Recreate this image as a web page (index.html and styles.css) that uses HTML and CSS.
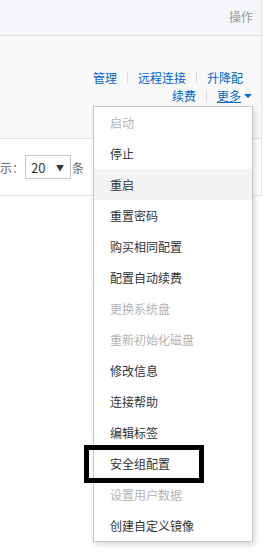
FILE: index.html
```html
<!DOCTYPE html>
<html lang="zh-CN">
<head>
  <meta charset="UTF-8" />
  <meta name="viewport" content="width=device-width, initial-scale=1" />
  <title>实例列表</title>
  <link rel="stylesheet" href="styles.css">
</head>
<body>
  <div class="table">
    <div class="thead">操作</div>
    <div class="row">
      <div class="ops">
        <div class="ops-line first">
          <a href="#">管理</a><span class="sep"></span><a href="#">远程连接</a><span class="sep"></span><a href="#">升降配</a>
        </div>
        <div class="ops-line">
          <a href="#">续费</a><span class="sep"></span><a href="#" class="more">更多</a><span class="caret"></span>
        </div>
      </div>
    </div>
    <div class="pager">
      <span class="pager-label">示：</span>
      <span class="select"><span>20</span><span class="arrow">▼</span></span>
      <span class="pager-label">条</span>
    </div>
  </div>

  <ul class="menu">
    <li class="disabled">启动</li>
    <li>停止</li>
    <li class="hover">重启</li>
    <li>重置密码</li>
    <li>购买相同配置</li>
    <li>配置自动续费</li>
    <li class="disabled">更换系统盘</li>
    <li class="disabled">重新初始化磁盘</li>
    <li>修改信息</li>
    <li>连接帮助</li>
    <li>编辑标签</li>
    <li>安全组配置</li>
    <li class="disabled">设置用户数据</li>
    <li>创建自定义镜像</li>
  </ul>

  <div class="mark"></div>
</body>
</html>
```

FILE: styles.css
```css
* {
  box-sizing: border-box;
}
body {
  margin: 0;
  width: 277px;
  height: 557px;
  overflow: hidden;
  background: #fff;
  font-family: "Noto Sans CJK SC", "Microsoft YaHei", sans-serif;
  font-size: 12px;
  color: #333;
  position: relative;
}
a {
  color: #0066cc;
  text-decoration: none;
}
.table {
  width: 262px;
  border-right: 1px solid #e5e5e5;
}
.thead {
  height: 36px;
  line-height: 34px;
  padding-right: 8px;
  text-align: right;
  color: #999;
  background: #f4f6f9;
  border-bottom: 1px solid #e1e1e1;
}
.row {
  height: 103px;
  background: #f9f9f9;
  border-bottom: 1px solid #e1e1e1;
  padding: 33px 9px 0 0;
}
.ops-line {
  display: flex;
  justify-content: flex-end;
  align-items: center;
  height: 18px;
  line-height: 18px;
}
.ops-line.first {
  padding-right: 9px;
}
.sep {
  display: inline-block;
  width: 1px;
  height: 12px;
  background: #dcdcdc;
  margin: 0 10px;
}
.more {
  text-decoration: underline;
}
.caret {
  display: inline-block;
  margin-left: 3px;
  border-left: 4px solid transparent;
  border-right: 4px solid transparent;
  border-top: 4px solid #0066cc;
}
.pager {
  height: 57px;
  display: flex;
  align-items: center;
  border-bottom: 1px solid #e1e1e1;
  color: #666;
}
.select {
  display: flex;
  align-items: center;
  justify-content: space-between;
  width: 46px;
  height: 24px;
  padding: 0 6px 0 5px;
  border: 1px solid #c9c9c9;
  color: #333;
  font-size: 13px;
  margin-right: 1px;
  margin-left: 1px;
}
.arrow {
  font-size: 8px;
  color: #333;
}
.menu {
  position: absolute;
  left: 93px;
  top: 106px;
  width: 160px;
  margin: 0;
  padding: 0;
  list-style: none;
  background: #fff;
  border: 1px solid #c6c6c6;
  box-shadow: 2px 3px 6px rgba(0, 0, 0, 0.15);
}
.menu li {
  height: 31px;
  line-height: 31px;
  padding-left: 16px;
  color: #333;
}
.menu li.hover {
  background: #f4f4f4;
}
.menu li.disabled {
  color: #b3b3b3;
}
.mark {
  position: absolute;
  left: 84px;
  top: 445px;
  width: 120px;
  height: 38px;
  border: 5px solid #000;
}
```
